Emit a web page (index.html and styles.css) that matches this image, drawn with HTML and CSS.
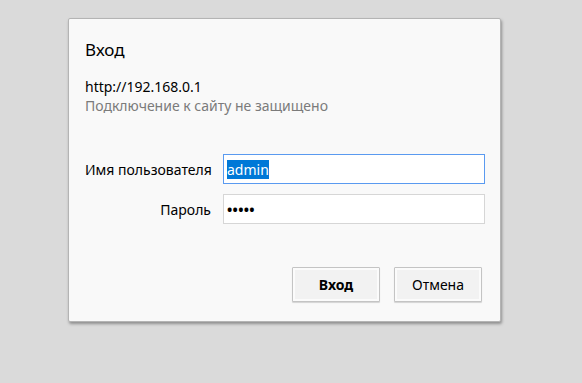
FILE: index.html
```html
<!DOCTYPE html>
<html lang="ru">
<head>
  <meta charset="UTF-8" />
  <title>Вход</title>
  <link rel="stylesheet" href="styles.css">
</head>
<body>
  <div class="dialog">
    <h1 class="title">Вход</h1>
    <div class="origin">http://192.168.0.1</div>
    <div class="warning">Подключение к сайту не защищено</div>

    <div class="form">
      <label class="label" for="user">Имя пользователя</label>
      <div class="field focused"><span class="selected">admin</span></div>
      <label class="label" for="pass">Пароль</label>
      <div class="field"><span class="dots">&#8226;&#8226;&#8226;&#8226;&#8226;</span></div>
    </div>

    <div class="actions">
      <button class="button primary">Вход</button>
      <button class="button">Отмена</button>
    </div>
  </div>
</body>
</html>
```

FILE: styles.css
```css
body {
  margin: 0;
  padding: 18px 0 0 68px;
  background-color: #dadada;
  font-family: 'Noto Sans', 'Open Sans', sans-serif;
  color: #000;
  height: 383px;
  box-sizing: border-box;
}
.dialog {
  width: 433px;
  height: 304px;
  box-sizing: border-box;
  padding: 19px 17px 0 16px;
  background-color: #f9f9f9;
  border: 1px solid #b4b4b4;
  border-radius: 2px;
  box-shadow: 1px 2px 3px rgba(0,0,0,0.35);
}
.title {
  margin: 0;
  font-size: 17px;
  font-weight: normal;
  line-height: 24px;
}
.origin {
  margin-top: 15px;
  font-size: 14px;
  line-height: 19px;
}
.warning {
  font-size: 14px;
  line-height: 19px;
  color: #7b7b7b;
}
.form {
  display: grid;
  grid-template-columns: 126px 262px;
  column-gap: 12px;
  row-gap: 10px;
  align-items: center;
  margin-top: 39px;
}
.label {
  text-align: right;
  font-size: 14px;
  white-space: nowrap;
}
.field {
  height: 30px;
  box-sizing: border-box;
  border: 1px solid #d6d6d6;
  background-color: #fff;
  padding: 0 3px;
  display: flex;
  align-items: center;
  font-size: 14px;
}
.field.focused {
  border-color: #5a9af0;
}
.selected {
  background-color: #0078d7;
  color: #fff;
  line-height: 19px;
}
.dots {
  font-size: 14px;
  font-weight: bold;
  letter-spacing: 0.3px;
}
.actions {
  display: flex;
  justify-content: flex-end;
  gap: 14px;
  margin-top: 43px;
  padding-right: 1px;
}
.button {
  width: 88px;
  height: 35px;
  font-family: inherit;
  font-size: 14px;
  color: #000;
  background-color: #f2f2f2;
  border: 1px solid #c4c4c4;
  box-shadow: inset 0 0 0 2px #fbfbfb, 0 1px 1px rgba(0,0,0,0.15);
  border-radius: 1px;
}
.button.primary {
  font-weight: bold;
}
```
